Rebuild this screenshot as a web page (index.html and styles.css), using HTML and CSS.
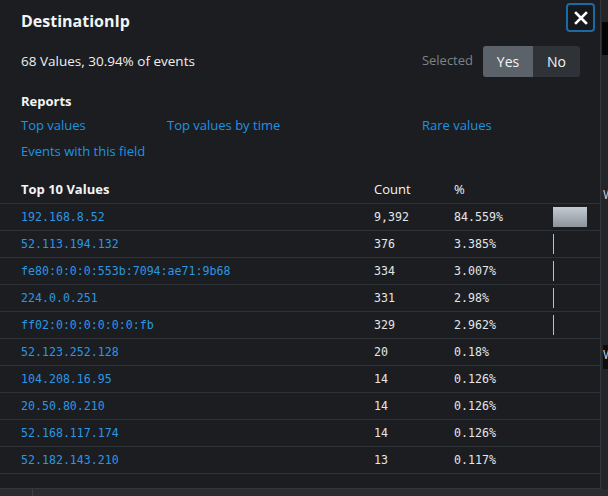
FILE: index.html
```html
<!DOCTYPE html>
<html>
<head>
<meta charset="utf-8">
<link rel="stylesheet" href="styles.css">
</head>
<body>
<div class="backdrop">
  <div class="bg-strip">
    <span class="bg-dark"></span>
    <span class="bg-w bg-w1">W</span>
    <span class="bg-w bg-w2">W</span>
  </div>
  <div class="bg-bottom"><span class="bg-line"></span></div>
</div>
<div class="popup">
  <button class="close" aria-label="Close">
    <svg width="14" height="14" viewBox="0 0 14 14"><path d="M2 2L12 12M12 2L2 12" stroke="#fff" stroke-width="2.6" stroke-linecap="square"/></svg>
  </button>
  <h1 class="title">DestinationIp</h1>
  <div class="summary">
    <span class="stats">68 Values, 30.94% of events</span>
    <div class="selected">
      <span class="sel-label">Selected</span>
      <div class="toggle">
        <span class="opt opt-on">Yes</span>
        <span class="opt">No</span>
      </div>
    </div>
  </div>
  <h2 class="reports">Reports</h2>
  <div class="links">
    <a>Top values</a>
    <a>Top values by time</a>
    <a>Rare values</a>
    <a>Events with this field</a>
  </div>
  <table class="values">
    <colgroup><col class="w-val"><col class="w-cnt"><col class="w-pct"><col class="w-bar"></colgroup>
    <thead>
      <tr><th class="c-val">Top 10 Values</th><th class="c-cnt">Count</th><th class="c-pct">%</th><th class="c-bar"></th></tr>
    </thead>
    <tbody>
      <tr><td class="c-val">192.168.8.52</td><td class="c-cnt">9,392</td><td class="c-pct">84.559%</td><td class="c-bar"><span class="bar" style="width:34px"></span></td></tr>
      <tr><td class="c-val">52.113.194.132</td><td class="c-cnt">376</td><td class="c-pct">3.385%</td><td class="c-bar"><span class="bar thin"></span></td></tr>
      <tr><td class="c-val">fe80:0:0:0:553b:7094:ae71:9b68</td><td class="c-cnt">334</td><td class="c-pct">3.007%</td><td class="c-bar"><span class="bar thin"></span></td></tr>
      <tr><td class="c-val">224.0.0.251</td><td class="c-cnt">331</td><td class="c-pct">2.98%</td><td class="c-bar"><span class="bar thin"></span></td></tr>
      <tr><td class="c-val">ff02:0:0:0:0:0:0:fb</td><td class="c-cnt">329</td><td class="c-pct">2.962%</td><td class="c-bar"><span class="bar thin"></span></td></tr>
      <tr><td class="c-val">52.123.252.128</td><td class="c-cnt">20</td><td class="c-pct">0.18%</td><td class="c-bar"></td></tr>
      <tr><td class="c-val">104.208.16.95</td><td class="c-cnt">14</td><td class="c-pct">0.126%</td><td class="c-bar"></td></tr>
      <tr><td class="c-val">20.50.80.210</td><td class="c-cnt">14</td><td class="c-pct">0.126%</td><td class="c-bar"></td></tr>
      <tr><td class="c-val">52.168.117.174</td><td class="c-cnt">14</td><td class="c-pct">0.126%</td><td class="c-bar"></td></tr>
      <tr><td class="c-val">52.182.143.210</td><td class="c-cnt">13</td><td class="c-pct">0.117%</td><td class="c-bar"></td></tr>
    </tbody>
  </table>
</div>
</body>
</html>
```
FILE: styles.css
```css
html, body {
  margin: 0;
  padding: 0;
  background: #25272b;
  width: 608px;
  height: 496px;
  overflow: hidden;
  font-family: "Open Sans", "Liberation Sans", sans-serif;
}
.backdrop {
  position: absolute;
  inset: 0;
}
.bg-strip {
  position: absolute;
  left: 602px;
  top: 0;
  width: 6px;
  height: 496px;
  background: #232529;
  overflow: hidden;
}
.bg-dark {
  position: absolute;
  left: 0;
  top: 22px;
  width: 6px;
  height: 33px;
  background: #050506;
}
.bg-w {
  position: absolute;
  left: 1px;
  font-size: 12px;
  color: #d5d8dc;
  line-height: 14px;
}
.bg-w1 { top: 188px; }
.bg-w2 { top: 345px; background: #0c0d0f; height: 24px; line-height: 20px; }
.bg-bottom {
  position: absolute;
  left: 0;
  top: 489px;
  width: 608px;
  height: 7px;
  background: #2a2c30;
}
.bg-line {
  position: absolute;
  left: 32px;
  top: 0;
  width: 1px;
  height: 7px;
  background: #3b3e43;
}
.popup {
  position: relative;
  width: 600px;
  height: 488px;
  background: #1b1d21;
  border-right: 1px solid #33363b;
  border-bottom: 1px solid #33363b;
  color: #e8eaec;
}
.close {
  position: absolute;
  top: 3px;
  left: 566px;
  width: 29px;
  height: 29px;
  padding: 0;
  background: #16181b;
  border: 2px solid #1a6aa6;
  border-radius: 4px;
  display: flex;
  align-items: center;
  justify-content: center;
}
.title {
  margin: 0;
  padding: 10px 21px 0;
  font-size: 16px;
  line-height: 22px;
  font-weight: 700;
  color: #f2f4f5;
}
.summary {
  display: flex;
  align-items: center;
  justify-content: space-between;
  padding: 14px 20px 0 21px;
}
.stats {
  font-size: 13.5px;
  color: #eef0f2;
  margin-top: -2px;
}
.selected {
  display: flex;
  align-items: center;
  gap: 10px;
}
.sel-label {
  font-size: 13px;
  color: #7d838a;
  margin-top: -4px;
}
.toggle {
  display: flex;
  height: 31px;
  border-radius: 3px;
  overflow: hidden;
  background: #2f3236;
}
.opt {
  display: flex;
  align-items: center;
  justify-content: center;
  font-size: 14px;
  color: #f3f4f5;
  width: 47px;
}
.opt-on {
  width: 50px;
  background: #5b626a;
}
.reports {
  margin: 0;
  padding: 15px 21px 0;
  font-size: 13px;
  line-height: 18px;
  font-weight: 700;
  color: #f2f4f5;
}
.links {
  display: grid;
  grid-template-columns: 146px 255px 1fr;
  row-gap: 8px;
  padding: 6px 21px 0;
  font-size: 13px;
  line-height: 18px;
}
.links a {
  color: #1e94e0;
  white-space: nowrap;
}
.values {
  border-collapse: collapse;
  table-layout: fixed;
  margin-top: 15px;
  width: 600px;
}
.w-val { width: 374px; }
.w-cnt { width: 80px; }
.w-pct { width: 99px; }
.w-bar { width: 47px; }
.values th {
  text-align: left;
  font-size: 13px;
  font-weight: 700;
  color: #f2f4f5;
  height: 28px;
  padding: 0;
  vertical-align: middle;
  border-bottom: 1px solid #2e3136;
}
.values th.c-cnt, .values th.c-pct { font-weight: 500; }
.values td {
  height: 26px;
  padding: 0;
  border-bottom: 1px solid #2e3136;
  font-family: "DejaVu Sans Mono", monospace;
  font-size: 11.6px;
  color: #e4e6e8;
  vertical-align: middle;
}
.values .c-val { padding-left: 21px; }
.values td.c-val { color: #2b97e2; }
.bar {
  display: block;
  height: 20px;
  background: linear-gradient(#c4cad1, #8c939b);
}
.bar.thin {
  width: 1px;
  background: #b9bfc6;
}
```
